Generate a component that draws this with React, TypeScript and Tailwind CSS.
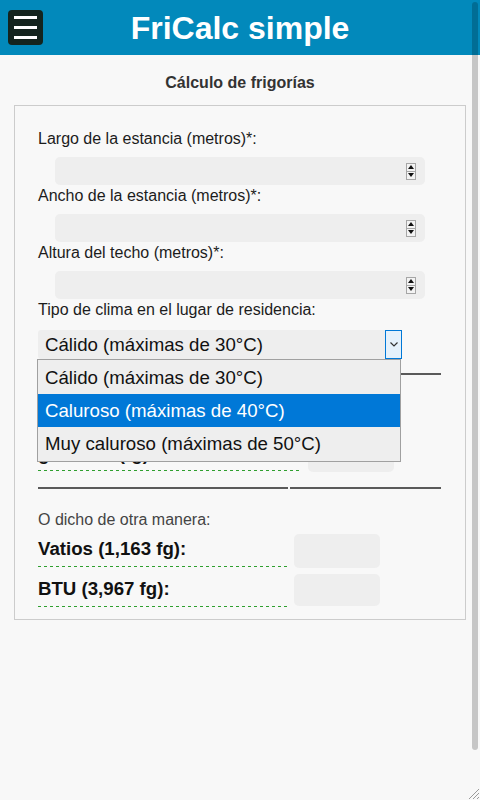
import React from 'react';

const CLIMAS = [
  'Cálido (máximas de 30°C)',
  'Caluroso (máximas de 40°C)',
  'Muy caluroso (máximas de 50°C)',
];

const DASHED = 'h-px bg-[repeating-linear-gradient(to_right,#2f9f2f_0px,#2f9f2f_3px,transparent_3px,transparent_6px)]';

function Spinner() {
  return (
    <div className="flex flex-col w-[10px] h-[17px] border border-[#a6a6a6] bg-[#f3f3f3]">
      <div className="flex-1 flex items-center justify-center border-b border-[#a6a6a6]">
        <svg width="6" height="4" viewBox="0 0 6 4"><path d="M0 4 L3 0 L6 4 Z" fill="#111" /></svg>
      </div>
      <div className="flex-1 flex items-center justify-center">
        <svg width="6" height="4" viewBox="0 0 6 4"><path d="M0 0 L3 4 L6 0 Z" fill="#111" /></svg>
      </div>
    </div>
  );
}

function NumberField({ label }: { label: string }) {
  return (
    <div className="mt-[2px]">
      <div className="text-[16px] leading-[18px] text-[#1c1c1c]">{label}</div>
      <div className="ml-[17px] mt-[9px] w-[370px] h-[28px] bg-[#eeeeee] rounded-[5px] flex items-center justify-end pr-[9px]">
        <Spinner />
      </div>
    </div>
  );
}

export default function App() {
  return (
    <div className="relative h-[800px] overflow-hidden bg-[#f8f8f8] font-['Liberation_Sans',Arial,sans-serif]">
      {/* Header */}
      <div className="h-[55px] bg-[#0289bb] flex items-center px-2">
        <div className="w-[35px] h-[35px] bg-[#14241e] rounded-[4px] flex flex-col items-center justify-center gap-[7px]">
          <div className="w-[23px] h-[3px] bg-white" />
          <div className="w-[23px] h-[3px] bg-white" />
          <div className="w-[23px] h-[3px] bg-white" />
        </div>
        <h1 className="flex-1 text-center text-white font-bold text-[32px] leading-[36px]">FriCalc simple</h1>
        <div className="w-[35px]" />
      </div>

      <h2 className="text-center font-bold text-[16px] leading-[18px] text-[#333] mt-[19px]">Cálculo de frigorías</h2>

      {/* Form box */}
      <div className="mx-[14px] mt-[13px] border border-[#cccccc] pl-[23px] pr-[24px] pt-[22px] pb-[12px]">
        <NumberField label="Largo de la estancia (metros)*:" />
        <NumberField label="Ancho de la estancia (metros)*:" />
        <NumberField label="Altura del techo (metros)*:" />

        <div className="mt-[2px] text-[16px] leading-[18px] text-[#1c1c1c]">Tipo de clima en el lugar de residencia:</div>
        <div className="relative mt-[11px] w-[364px] h-[29px] bg-[#eeeeee] rounded-[3px] flex items-center">
          <span className="flex-1 pl-[7px] text-[18.67px] leading-[21px] text-[#111]">{CLIMAS[0]}</span>
          <div className="w-[17px] h-[29px] border border-[#0078d7] bg-[#e5f1fb] flex items-center justify-center">
            <svg width="8" height="5" viewBox="0 0 8 5"><path d="M0.5 0.5 L4 4 L7.5 0.5" stroke="#333" strokeWidth="1.2" fill="none" /></svg>
          </div>

          {/* Open dropdown list */}
          <div className="absolute z-10 top-full left-[-1px] w-[364px] border border-[#a0a0a0] bg-[#eeeeee] py-[0.5px]">
            {CLIMAS.map((c, i) => (
              <div
                key={c}
                className={`h-[33.4px] flex items-center pl-[7px] text-[18.67px] leading-[21px] ${i === 1 ? 'bg-[#0078d7] text-white' : 'text-[#111]'}`}
              >
                {c}
              </div>
            ))}
          </div>
        </div>

        {/* Result table */}
        <div className="mt-[14px] w-[403px] border-t-2 border-[#5a5a5a]" />
        <div className="flex items-end gap-[8px] mt-[46px]">
          <div className="w-[262px] mb-px">
            <div className="pb-[5px] font-bold text-[18.67px] leading-[22px] text-[#111]">
              Frigorías necesarias<br />globales (fg):
            </div>
            <div className={DASHED} />
          </div>
          <div className="w-[86px] h-[32px] bg-[#eeeeee] rounded-[5px]" />
        </div>
        <div className="flex gap-[2px] mt-[15px]">
          <div className="w-[251px] border-t-2 border-[#5a5a5a]" />
          <div className="w-[151px] border-t-2 border-[#5a5a5a]" />
        </div>

        <div className="mt-[22px] text-[16px] leading-[18px] text-[#444]">O dicho de otra manera:</div>
        <div className="flex gap-[6px] mt-[5px]">
          <div className="w-[250px] h-[33px] flex flex-col">
            <div className="flex-1 pt-[4px] font-bold text-[18.67px] leading-[21px] text-[#111]">Vatios (1,163 fg):</div>
            <div className={DASHED} />
          </div>
          <div className="w-[86px] h-[34px] bg-[#eeeeee] rounded-[5px]" />
        </div>
        <div className="flex gap-[6px] mt-[6px]">
          <div className="w-[250px] h-[33px] flex flex-col">
            <div className="flex-1 pt-[4px] font-bold text-[18.67px] leading-[21px] text-[#111]">BTU (3,967 fg):</div>
            <div className={DASHED} />
          </div>
          <div className="w-[86px] h-[32px] bg-[#eeeeee] rounded-[5px]" />
        </div>
      </div>

      {/* Overlay scrollbar */}
      <div className="absolute right-[2px] top-[2px] w-[6px] h-[748px] rounded-full bg-black/20" />
      {/* Resize grip */}
      <svg className="absolute right-0 bottom-0" width="14" height="14" viewBox="0 0 14 14">
        <path d="M13 3 L3 13 M13 7 L7 13 M13 11 L11 13" stroke="#9a9a9a" strokeWidth="1" />
      </svg>
    </div>
  );
}
